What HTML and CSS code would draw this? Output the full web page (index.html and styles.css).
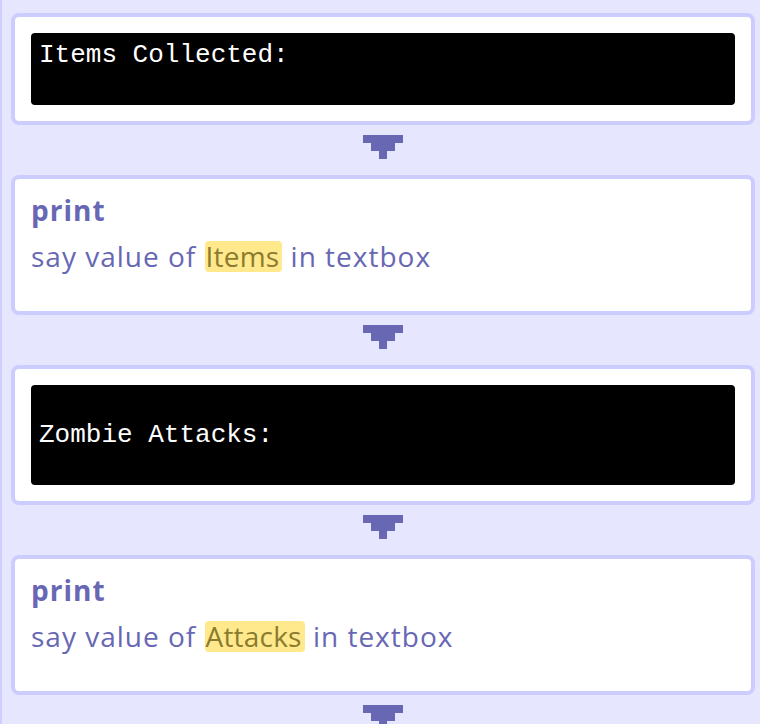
FILE: index.html
```html
<!DOCTYPE html>
<html lang="en">
<head>
<meta charset="utf-8">
<title>Program</title>
<link rel="stylesheet" href="styles.css">
</head>
<body>
<div class="panel">
  <div class="card">
    <div class="console">
      <div class="line">Items Collected:</div>
      <div class="line">&nbsp;</div>
    </div>
  </div>
  <div class="connector"><span class="r1"></span><span class="r2"></span><span class="r3"></span></div>
  <div class="card text-card">
    <div class="title">print</div>
    <div class="desc">say value of <span class="var">Items</span> in textbox</div>
  </div>
  <div class="connector"><span class="r1"></span><span class="r2"></span><span class="r3"></span></div>
  <div class="card">
    <div class="console">
      <div class="line">&nbsp;</div>
      <div class="line">Zombie Attacks:</div>
      <div class="line">&nbsp;</div>
    </div>
  </div>
  <div class="connector"><span class="r1"></span><span class="r2"></span><span class="r3"></span></div>
  <div class="card text-card">
    <div class="title">print</div>
    <div class="desc">say value of <span class="var">Attacks</span> in textbox</div>
  </div>
  <div class="connector"><span class="r1"></span><span class="r2"></span><span class="r3"></span></div>
</div>
</body>
</html>
```

FILE: styles.css
```css
html, body {
  margin: 0;
  padding: 0;
  background: #e6e6ff;
  overflow: hidden;
}
.panel {
  border-left: 2px solid #cfcfff;
  padding: 13px 5px 0 9px;
  min-height: 724px;
  box-sizing: border-box;
  display: flex;
  flex-direction: column;
}
.card {
  background: #ffffff;
  border: 4px solid #ccccff;
  border-radius: 8px;
  padding: 16px;
}
.console {
  background: #000000;
  border-radius: 4px;
  padding: 8px;
  color: #ffffff;
  font-family: "Liberation Mono", "Courier New", monospace;
  font-size: 26px;
  line-height: 28px;
}
.line {
  height: 28px;
  white-space: pre;
}
.connector {
  display: flex;
  flex-direction: column;
  align-items: center;
  padding: 10px 0 16px;
}
.connector span {
  display: block;
  height: 8px;
  background: #6767b4;
}
.connector .r1 { width: 40px; }
.connector .r2 { width: 24px; }
.connector .r3 { width: 8px; }
.text-card {
  color: #6767b4;
  font-family: "Open Sans", "Noto Sans", sans-serif;
  font-size: 28px;
  letter-spacing: 1px;
}
.title {
  font-weight: 700;
  line-height: 30px;
  margin-bottom: 16px;
}
.desc {
  line-height: 30px;
  margin-bottom: 23px;
}
.var {
  display: inline-block;
  line-height: 31px;
  letter-spacing: 0.2px;
  background: #ffe98c;
  color: #8b7b2f;
  border-radius: 4px;
  padding: 0 3px 0 1px;
}
```
